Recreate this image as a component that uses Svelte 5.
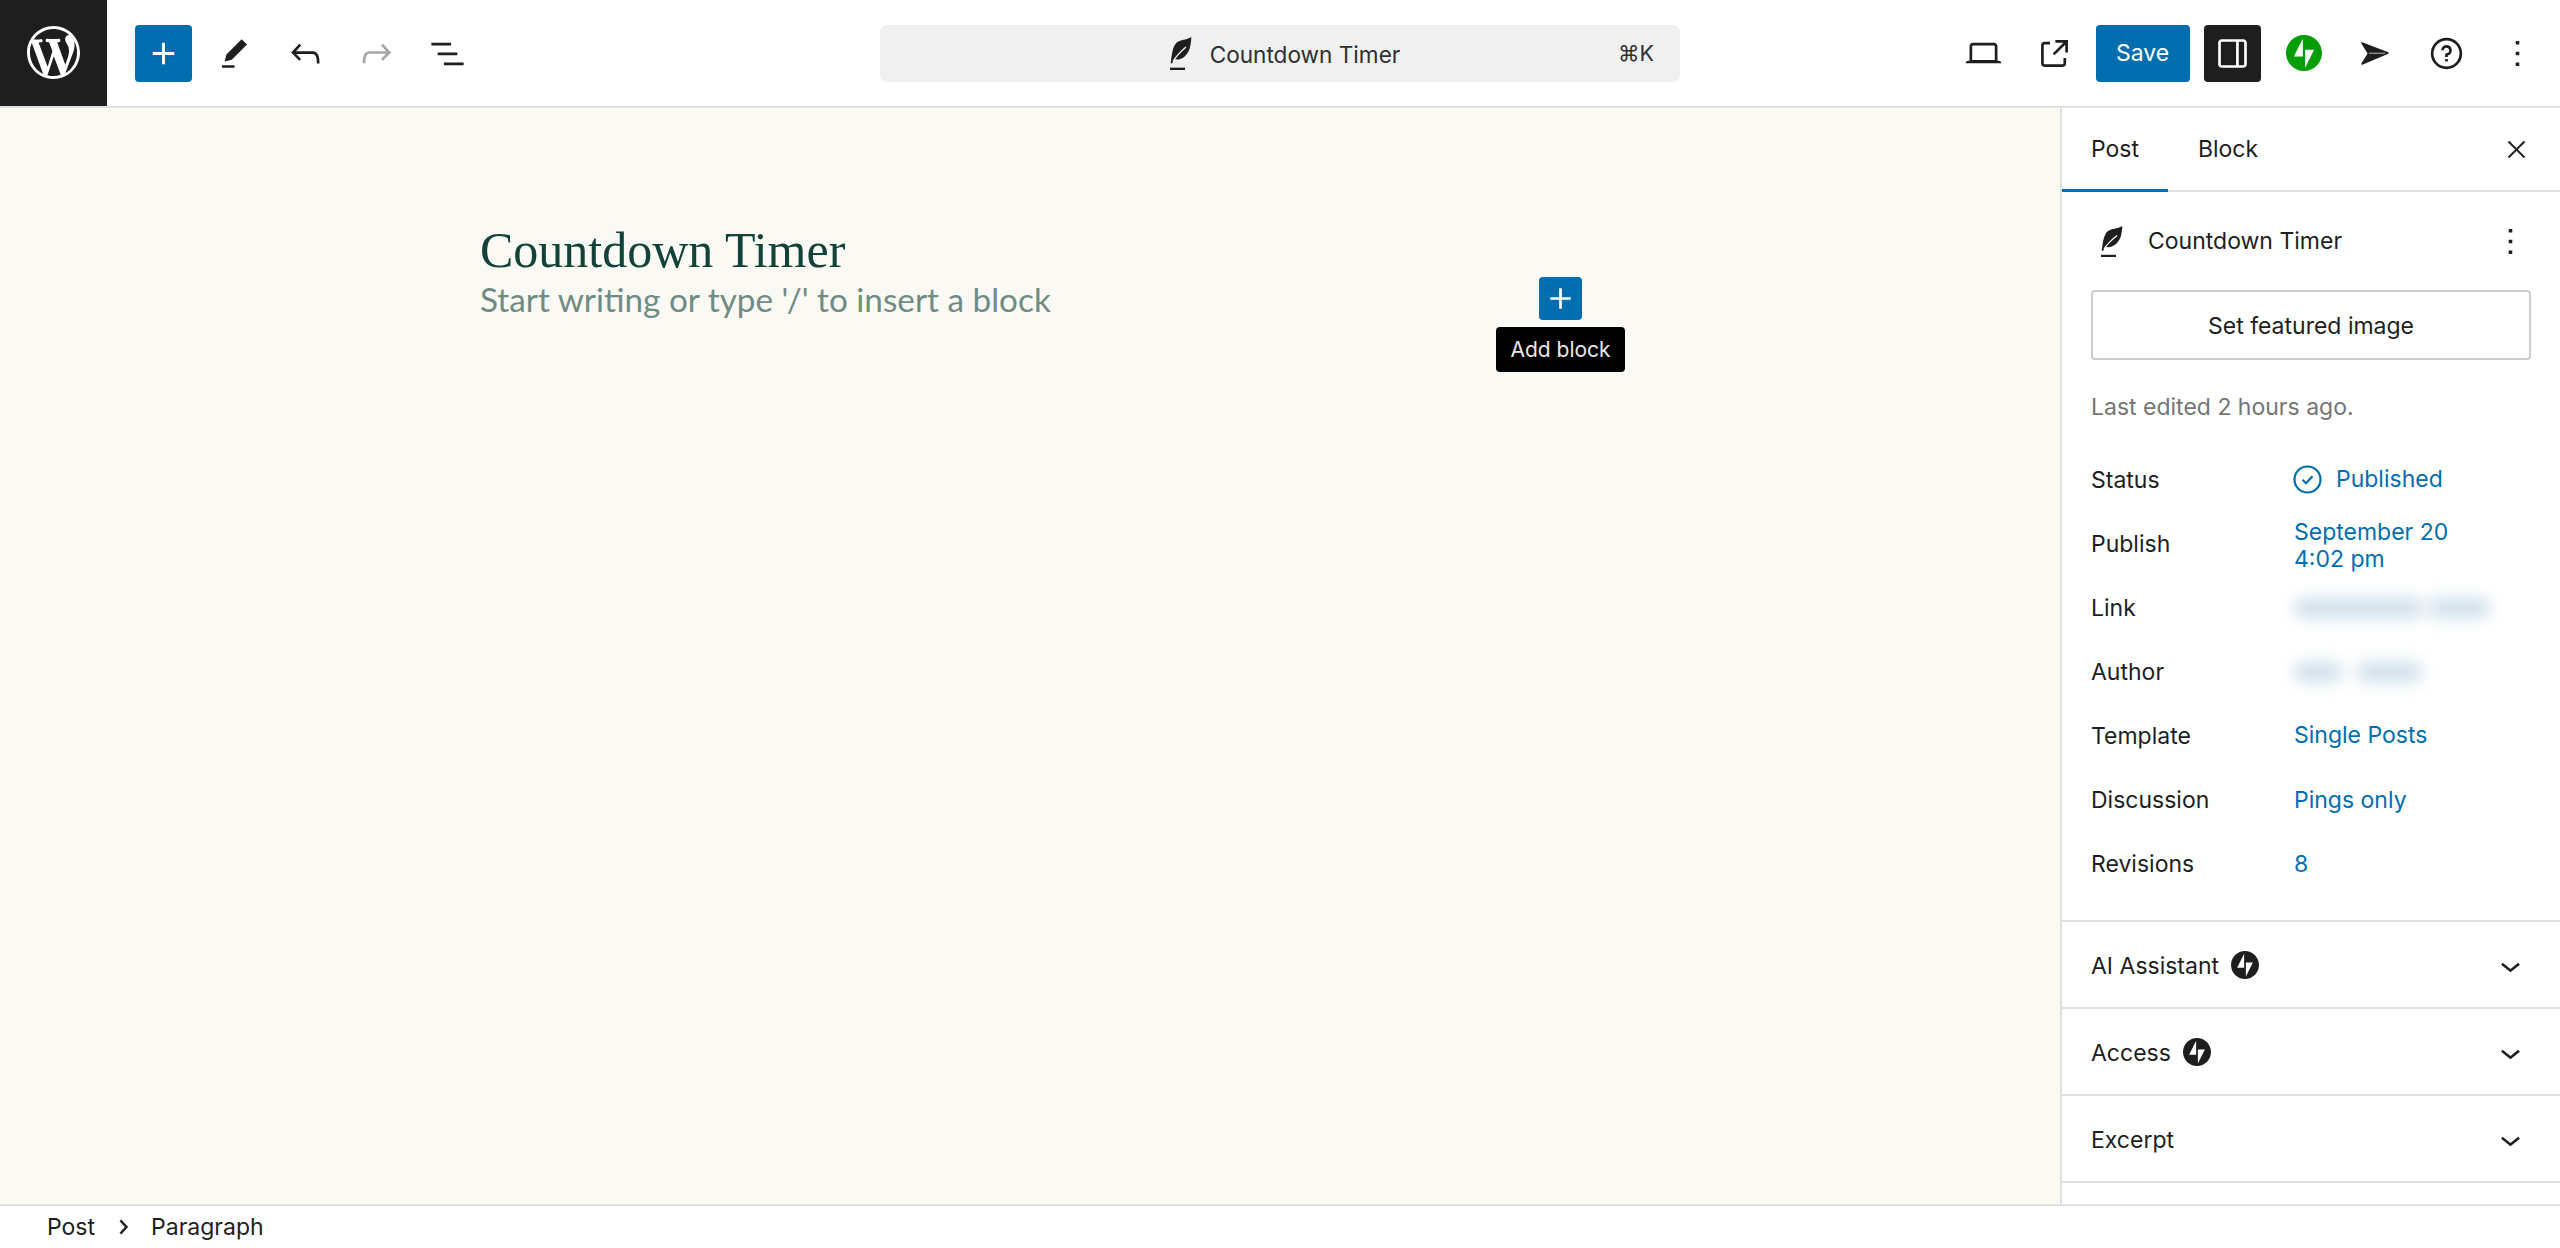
<script>
  const icons = {
    wp: 'M20 10c0-5.51-4.49-10-10-10C4.48 0 0 4.49 0 10c0 5.52 4.48 10 10 10 5.51 0 10-4.48 10-10zM7.78 15.37L4.37 6.22c.55-.02 1.17-.08 1.17-.08.5-.06.44-1.13-.06-1.11 0 0-1.45.11-2.37.11-.18 0-.37 0-.58-.01C4.12 2.69 6.87 1.11 10 1.11c2.33 0 4.45.87 6.05 2.34-.68-.11-1.65.39-1.65 1.58 0 .74.45 1.36.9 2.1.35.61.55 1.36.55 2.46 0 1.49-1.4 5-1.4 5l-3.03-8.37c.54-.02.82-.17.82-.17.5-.05.44-1.25-.06-1.22 0 0-1.44.12-2.38.12-.87 0-2.33-.12-2.33-.12-.5-.03-.56 1.2-.06 1.22l.92.08 1.26 3.41zM17.41 10c.24-.64.74-1.87.43-4.25.7 1.29 1.05 2.71 1.05 4.25 0 3.29-1.73 6.24-4.4 7.78.97-2.59 1.94-5.2 2.92-7.78zM6.1 18.09C3.12 16.65 1.11 13.53 1.11 10c0-1.3.23-2.48.72-3.59C3.25 10.3 4.67 14.2 6.1 18.09zm4.03-6.63l2.58 6.98c-.86.29-1.76.45-2.71.45-.79 0-1.57-.11-2.29-.33.81-2.38 1.62-4.74 2.42-7.1z',
    plus: 'M18 11.2h-5.2V6h-1.6v5.2H6v1.6h5.2V18h1.6v-5.2H18z',
    pen: 'm19 7-3-3-8.5 8.5-1 4 4-1L19 7Zm-7 11.5H5V20h7v-1.5Z',
    undo: 'M18.3 11.7c-.6-.6-1.4-.9-2.3-.9H6.7l2.9-3.3-1.1-1-4.5 5L8.5 16l1-1-2.7-2.7H16c.5 0 .9.2 1.3.5 1 1 1 3.4 1 4.5v.3h1.5v-.2c0-1.5 0-4.3-1.5-5.7z',
    redo: 'M15.6 6.5l-1.1 1 2.9 3.3H8c-.9 0-1.7.3-2.3.9-1.4 1.5-1.4 4.2-1.4 5.6v.2h1.5v-.3c0-1.1 0-3.5 1-4.5.3-.3.7-.5 1.3-.5h9.2L14.5 15l1.1 1.1 4.6-4.6-4.6-5z',
    list: 'M3 6h11v1.5H3V6Zm3.5 5.5h11V13h-11v-1.5ZM21 17H10v1.5h11V17Z',
    laptop: 'M20.5 16h-.7V8c0-1.1-.9-2-2-2H6.2c-1.1 0-2 .9-2 2v8h-.7c-.8 0-1.5.7-1.5 1.5h20c0-.8-.7-1.5-1.5-1.5zM5.7 8c0-.3.2-.5.5-.5h11.6c.3 0 .5.2.5.5v7.6H5.7V8z',
    external: 'M19.5 4.5h-7V6h4.44l-5.97 5.97 1.06 1.06L18 7.06v4.44h1.5v-7Zm-13 1a2 2 0 0 0-2 2v10a2 2 0 0 0 2 2h10a2 2 0 0 0 2-2v-3H17v3a.5.5 0 0 1-.5.5h-10a.5.5 0 0 1-.5-.5v-10a.5.5 0 0 1 .5-.5h3V5.5h-3Z',
    drawer: 'M18 4H6c-1.1 0-2 .9-2 2v12c0 1.1.9 2 2 2h12c1.1 0 2-.9 2-2V6c0-1.1-.9-2-2-2zm-4 14.5H6c-.3 0-.5-.2-.5-.5V6c0-.3.2-.5.5-.5h8v13zm4.5-.5c0 .3-.2.5-.5.5h-2.5v-13H18c.3 0 .5.2.5.5v12z',
    help: 'M12 4.75a7.25 7.25 0 100 14.5 7.25 7.25 0 000-14.5zM3.25 12a8.75 8.75 0 1117.5 0 8.75 8.75 0 01-17.5 0zM12 8.75a1.5 1.5 0 01.167 2.99c-.465.052-.917.44-.917 1.01V14h1.5v-.845A3 3 0 109 10.25h1.5a1.5 1.5 0 011.5-1.5zM11.25 15v1.5h1.5V15h-1.5z',
    more: 'M13 19h-2v-2h2v2zm0-6h-2v-2h2v2zm0-6h-2V5h2v2z',
    close: 'm13.06 12 6.47-6.47-1.06-1.06L12 10.94 5.53 4.47 4.47 5.53 10.94 12l-6.47 6.47 1.06 1.06L12 13.06l6.47 6.47 1.06-1.06L13.06 12Z',
    down: 'M17.5 11.6L12 16l-5.5-4.4.9-1.2L12 14l4.5-3.6 1 1.2z',
    right: 'M10.6 6L9.4 7l4.6 5-4.6 5 1.2 1 5.4-6z'
  };

  const jetpack = 'M16,0C7.2,0,0,7.2,0,16s7.2,16,16,16s16-7.2,16-16S24.8,0,16,0z M15,19H7l8-16V19z M17,29V13h8L17,29z';

  const rows = [
    { label: 'Status', value: 'Published', kind: 'status' },
    { label: 'Publish', value: 'September 20', second: '4:02 pm' },
    { label: 'Link', kind: 'blur-link' },
    { label: 'Author', kind: 'blur-author' },
    { label: 'Template', value: 'Single Posts' },
    { label: 'Discussion', value: 'Pings only' },
    { label: 'Revisions', value: '8' }
  ];

  const panels = [
    { title: 'AI Assistant', badge: true },
    { title: 'Access', badge: true },
    { title: 'Excerpt', badge: false }
  ];
</script>

{#snippet icon(d, size = 43)}
  <svg width={size} height={size} viewBox="0 0 24 24" fill="currentColor" aria-hidden="true"><path {d} /></svg>
{/snippet}

{#snippet feather(w, h)}
  <svg width={w} height={h} viewBox="0 0 22 31" preserveAspectRatio="none" aria-hidden="true">
    <path fill="#1e1e1e" d="M21.3 0C16 3 11 2.500 7 5 3 8 2 15 .7 24.700h1.500C3 22.500 4 21.500 5.500 21 11 22 17 18 19.700 10.700 20.700 7 21.300 3 21.300 0Z" />
    <path fill="none" stroke="#fff" stroke-width="1.200" d="M3 23C6.500 17.500 10.500 14 16 9.500" />
    <rect x="0" y="28.800" width="15" height="2.200" fill="#1e1e1e" />
  </svg>
{/snippet}

<div class="editor">
  <header class="topbar">
    <div class="top-left">
      <div class="logo">
        <svg width="53" height="53" viewBox="0 0 20 20" fill="currentColor" aria-hidden="true"><path d={icons.wp} /></svg>
      </div>
      <button class="inserter">{@render icon(icons.plus)}</button>
      <button class="tool">{@render icon(icons.pen)}</button>
      <button class="tool">{@render icon(icons.undo)}</button>
      <button class="tool muted">{@render icon(icons.redo)}</button>
      <button class="tool">{@render icon(icons.list)}</button>
    </div>

    <div class="command">
      <span class="command-title">
        {@render feather(22, 33)}
        <span>Countdown Timer</span>
      </span>
      <span class="shortcut">⌘K</span>
    </div>

    <div class="top-right">
      <button class="tool">{@render icon(icons.laptop)}</button>
      <button class="tool">{@render icon(icons.external)}</button>
      <button class="save">Save</button>
      <button class="toggle">{@render icon(icons.drawer)}</button>
      <button class="tool jp">
        <svg width="36" height="36" viewBox="0 0 32 32" fill="#069e08" aria-hidden="true"><path d={jetpack} /></svg>
      </button>
      <button class="tool">
        <svg width="28" height="23" viewBox="0 0 28 23" aria-hidden="true">
          <path fill="#1e1e1e" stroke="#1e1e1e" stroke-width="1.500" stroke-linejoin="round" d="M1 1l26 10L1 22l6.500-10.500L1 1Z" />
          <path stroke="#fff" stroke-width=".7" d="M8 11.200h16" />
        </svg>
      </button>
      <button class="tool">{@render icon(icons.help)}</button>
      <button class="tool">{@render icon(icons.more)}</button>
    </div>
  </header>

  <div class="main">
    <main class="canvas">
      <h1>Countdown Timer</h1>
      <div class="paragraph">
        <p>Start writing or type '/' to insert a block</p>
        <button class="add-block">{@render icon(icons.plus, 41)}</button>
        <div class="tooltip">Add block</div>
      </div>
    </main>

    <aside class="sidebar">
      <div class="tabs">
        <button class="tab active">Post</button>
        <button class="tab block-tab">Block</button>
        <button class="close">{@render icon(icons.close, 27)}</button>
      </div>

      <section class="summary">
        <div class="post-title">
          {@render feather(22, 31)}
          <span>Countdown Timer</span>
          <button class="more">{@render icon(icons.more)}</button>
        </div>
        <button class="featured">Set featured image</button>
        <p class="edited">Last edited 2 hours ago.</p>

        <dl class="rows">
          {#each rows as row}
            <div class="row">
              <dt>{row.label}</dt>
              <dd class:two={row.second}>
                {#if row.kind === 'status'}
                  <span class="status">
                    <svg width="29" height="29" viewBox="0 0 29 29" fill="none" stroke="currentColor" aria-hidden="true">
                      <circle cx="14.500" cy="14.500" r="13" stroke-width="2.200" />
                      <path stroke-width="2.200" d="M9.500 14.800l3.500 3.400 6.500-7" />
                    </svg>
                    {row.value}
                  </span>
                {:else if row.kind === 'blur-link'}
                  <span class="smudge link-a"></span><span class="smudge link-b"></span>
                {:else if row.kind === 'blur-author'}
                  <span class="smudge author-a"></span><span class="smudge author-b"></span>
                {:else}
                  {row.value}
                  {#if row.second}<br />{row.second}{/if}
                {/if}
              </dd>
            </div>
          {/each}
        </dl>
      </section>

      {#each panels as panel}
        <section class="panel">
          <span class="panel-title">
            <span class="panel-label">{panel.title}</span>
            {#if panel.badge}
              <svg width="28" height="28" viewBox="0 0 32 32" fill="#1e1e1e" aria-hidden="true"><path d={jetpack} /></svg>
            {/if}
          </span>
          <span class="chevron">{@render icon(icons.down, 41)}</span>
        </section>
      {/each}
    </aside>
  </div>

  <footer class="crumbs">
    <span>Post</span>
    {@render icon(icons.right, 28)}
    <span>Paragraph</span>
  </footer>
</div>

<style>
  :global(body) {
    margin: 0;
    font-family: Inter, "Liberation Sans", sans-serif;
    color: #1e1e1e;
  }

  button {
    font: inherit;
    color: inherit;
    background: none;
    border: none;
    padding: 0;
    display: flex;
    align-items: center;
    justify-content: center;
  }

  .editor {
    height: 1248px;
    display: flex;
    flex-direction: column;
    overflow: hidden;
    font-size: 23px;
    background: #fff;
  }

  .topbar {
    height: 108px;
    flex: none;
    box-sizing: border-box;
    border-bottom: 2px solid #e0e0e0;
    display: grid;
    grid-template-columns: 1fr 800px 1fr;
    align-items: center;
  }

  .top-left,
  .top-right {
    display: flex;
    align-items: center;
  }

  .top-right {
    justify-content: flex-end;
    padding-right: 7.500px;
  }

  .logo {
    width: 107px;
    height: 107px;
    margin-top: -1px;
    background: #1e1e1e;
    color: #fff;
    display: flex;
    align-items: center;
    justify-content: center;
  }

  .inserter {
    width: 57px;
    height: 57px;
    margin: 0 7px 0 28px;
    background: #006eae;
    color: #fff;
    border-radius: 4px;
  }

  .tool {
    width: 71px;
    height: 57px;
  }

  .muted {
    color: #a7a7a7;
  }

  .command {
    height: 57px;
    background: #f0f0f0;
    border-radius: 7px;
    position: relative;
    display: flex;
    align-items: center;
    justify-content: center;
    color: #2f2f2f;
    font-size: 22.600px;
  }

  .command-title {
    display: flex;
    align-items: center;
    gap: 18px;
    padding: 2px 0 0 10px;
  }

  .command-title svg {
    margin-top: -2px;
  }

  .shortcut {
    position: absolute;
    right: 26px;
    font-size: 21.500px;
  }

  .save {
    width: 94px;
    height: 57px;
    margin: 0 14px 0 6px;
    background: #006eae;
    color: #fff;
    border-radius: 4px;
  }

  .toggle {
    width: 57px;
    height: 57px;
    margin-right: 8px;
    background: #1e1e1e;
    color: #fff;
    border-radius: 4px;
  }

  .main {
    flex: 1;
    min-height: 0;
    display: flex;
  }

  .canvas {
    flex: 1;
    background: #faf9f4;
    padding: 112px 0 0 480px;
    min-width: 0;
  }

  h1 {
    margin: 0;
    font-family: "Liberation Serif", serif;
    font-weight: 400;
    font-size: 50px;
    line-height: 60px;
    color: #12423a;
  }

  .paragraph {
    position: relative;
    width: 1100px;
  }

  .paragraph p {
    margin: -3px 0 0;
    font-family: Lato, sans-serif;
    font-size: 33.300px;
    line-height: 44px;
    color: #6f8c84;
  }

  .add-block {
    position: absolute;
    left: 1059px;
    top: 0;
    width: 43px;
    height: 43px;
    background: #006eae;
    color: #fff;
    border-radius: 4px;
  }

  .tooltip {
    position: absolute;
    left: 1016px;
    top: 50px;
    width: 129px;
    height: 45px;
    background: #000;
    color: #e8e8e8;
    font-size: 21px;
    border-radius: 4px;
    display: flex;
    align-items: center;
    justify-content: center;
  }

  .sidebar {
    width: 500px;
    flex: none;
    box-sizing: border-box;
    border-left: 2px solid #e0e0e0;
    background: #fff;
    overflow: hidden;
  }

  .tabs {
    height: 84px;
    box-sizing: border-box;
    border-bottom: 2px solid #e0e0e0;
    display: flex;
    align-items: stretch;
    position: relative;
  }

  .tab {
    width: 106px;
    margin-bottom: -2px;
    border-bottom: 3px solid transparent;
  }

  .tab.active {
    border-bottom-color: #006eae;
  }

  .block-tab {
    width: 120px;
  }

  .close {
    margin-left: auto;
    width: 43px;
    margin-right: 22px;
  }

  .close svg {
    stroke: currentColor;
    stroke-width: .4;
  }

  .summary {
    box-sizing: border-box;
    height: 730px;
    padding: 0 29px;
    border-bottom: 2px solid #e0e0e0;
  }

  .post-title {
    height: 98px;
    display: flex;
    align-items: center;
    gap: 25px;
    padding-left: 10px;
  }

  .post-title .more {
    margin-left: auto;
    margin-right: -1px;
  }

  .featured {
    width: 100%;
    height: 70px;
    box-sizing: border-box;
    border: 2px solid #ccc;
    border-radius: 4px;
    padding-top: 2px;
  }

  .edited {
    margin: 32px 0 0;
    line-height: 30px;
    color: #757575;
  }

  .rows {
    margin: 25.500px 0 0;
  }

  .row {
    height: 64.100px;
    display: grid;
    grid-template-columns: 203px 1fr;
    align-items: center;
  }

  dd {
    margin: 0;
    color: #006eae;
    line-height: 27px;
    display: flex;
    flex-wrap: wrap;
    align-items: center;
  }

  dd.two {
    padding-top: 4px;
  }

  dd br {
    flex-basis: 100%;
  }

  .status {
    display: flex;
    align-items: center;
    gap: 14px;
    margin-left: -1px;
  }

  .smudge {
    display: block;
    height: 20px;
    background: #cfe0ec;
    filter: blur(8px);
    border-radius: 10px;
  }

  .link-a {
    width: 130px;
  }

  .link-b {
    width: 64px;
    margin-left: 3px;
  }

  .author-a {
    width: 48px;
  }

  .author-b {
    width: 66px;
    margin-left: 14px;
  }

  .panel {
    box-sizing: border-box;
    height: 87px;
    padding: 0 29px;
    border-bottom: 2px solid #e0e0e0;
    display: flex;
    align-items: center;
    justify-content: space-between;
  }

  .panel-title {
    display: flex;
    align-items: center;
    gap: 12px;
  }

  .panel-label {
    padding-top: 2px;
  }

  .chevron {
    display: flex;
    padding-top: 2px;
  }

  .crumbs {
    height: 44px;
    flex: none;
    box-sizing: border-box;
    border-top: 2px solid #e0e0e0;
    padding-left: 47px;
    display: flex;
    align-items: center;
    gap: 14px;
  }

  .crumbs svg {
    stroke: currentColor;
    stroke-width: .7;
  }
</style>
